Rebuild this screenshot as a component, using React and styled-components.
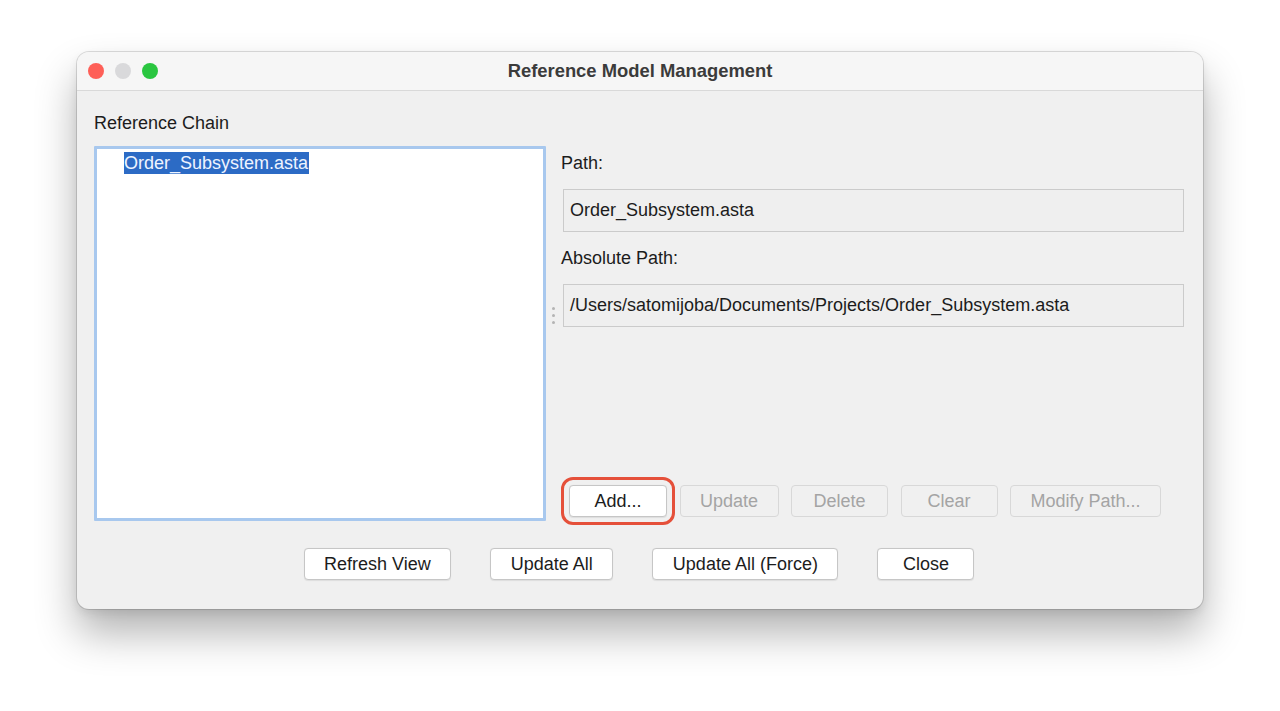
import React from "react";
import styled, { createGlobalStyle } from "styled-components";

const Global = createGlobalStyle`
  html, body { margin: 0; padding: 0; background: #ffffff; }
  body { font-family: "Liberation Sans", Arial, Helvetica, sans-serif; color: #1c1c1c; }
  * { box-sizing: border-box; }
`;

const Page = styled.div`
  width: 1280px;
  height: 711px;
  padding: 52px 0 0 77px;
  overflow: hidden;
`;

const Window = styled.div`
  width: 1126px;
  height: 557px;
  border-radius: 12px;
  background: #f0f0f0;
  box-shadow: 0 0 0 1px rgba(0, 0, 0, 0.13), 0 24px 42px rgba(0, 0, 0, 0.3), 0 4px 10px rgba(0,0,0,0.08);
  display: flex;
  flex-direction: column;
  overflow: hidden;
`;

const TitleBar = styled.div`
  height: 39px;
  flex: none;
  position: relative;
  display: flex;
  align-items: center;
  justify-content: center;
  background: #f6f6f6;
  border-bottom: 1px solid #d9d9d9;
`;

const Lights = styled.div`
  position: absolute;
  left: 11px;
  top: 11px;
  display: flex;
  gap: 11px;
`;

const Light = styled.span`
  width: 16px;
  height: 16px;
  border-radius: 50%;
  background: ${(p) => p.$color};
`;

const Title = styled.div`
  font-weight: 700;
  font-size: 18.4px;
  color: #3b3b3b;
`;

const Body = styled.div`
  flex: 1;
  padding: 22px 19px 30px 17px;
  display: flex;
  flex-direction: column;
`;

const Main = styled.div`
  display: grid;
  grid-template-columns: 452px 15px 1fr;
`;

const LeftCol = styled.div`
  display: flex;
  flex-direction: column;
`;

const Label = styled.div`
  font-size: 18px;
  line-height: 20px;
  height: 20px;
  color: #1c1c1c;
`;

const ListBox = styled.div`
  margin-top: 13px;
  height: 375px;
  background: #ffffff;
  border: 3px solid #a8c8ee;
  border-radius: 1px;
  padding: 3px 0 0 27px;
`;

const ListItem = styled.span`
  display: inline-block;
  font-size: 18px;
  line-height: 22px;
  height: 22px;
  padding-right: 1px;
  background: ${(p) => (p.$selected ? "#2c6bc5" : "transparent")};
  color: ${(p) => (p.$selected ? "#eef4ff" : "#1c1c1c")};
`;

const Splitter = styled.div`
  display: flex;
  flex-direction: column;
  align-items: center;
  gap: 4px;
  padding-top: 194px;
`;

const Dot = styled.span`
  width: 3px;
  height: 3px;
  border-radius: 50%;
  background: #b4b4b4;
`;

const RightCol = styled.div`
  margin-top: 40px;
  display: flex;
  flex-direction: column;
  padding-bottom: 4px;
`;

const Field = styled.div`
  margin: 16px 0 16px 2px;
  height: 43px;
  display: flex;
  align-items: center;
  padding-left: 6px;
  background: #efefef;
  border: 1px solid #cbcbcb;
  font-size: 18px;
  color: #1c1c1c;
  &:last-of-type { margin-bottom: 0; }
`;

const ButtonRow = styled.div`
  margin-top: auto;
  display: flex;
  gap: 12.5px;
  padding-left: 8px;
  justify-content: ${(p) => (p.$center ? "center" : "flex-start")};
  ${(p) => p.$center && "gap: 39px; margin-top: 27px; padding-left: 0;"}
`;

const Button = styled.button`
  height: 32px;
  min-width: 97px;
  padding: 0 19.5px;
  font-family: inherit;
  font-size: 18px;
  border-radius: 4px;
  border: 1px solid ${(p) => (p.disabled ? "#d8d8d8" : "#c6c6c6")};
  background: ${(p) => (p.disabled ? "#f0f0f0" : "#ffffff")};
  color: ${(p) => (p.disabled ? "#a4a4a4" : "#1c1c1c")};
  box-shadow: ${(p) => (p.disabled ? "none" : "0 0.5px 1px rgba(0,0,0,0.08)")};
  ${(p) =>
    p.$highlight &&
    `min-width: 98px; outline: 3px solid #e5503a; outline-offset: 5px;`}
`;

export default function App() {
  return (
    <Page>
      <Global />
      <Window>
        <TitleBar>
          <Lights>
            <Light $color="#fe5f57" />
            <Light $color="#d9d9db" />
            <Light $color="#2ac640" />
          </Lights>
          <Title>Reference Model Management</Title>
        </TitleBar>
        <Body>
          <Main>
            <LeftCol>
              <Label>Reference Chain</Label>
              <ListBox>
                <ListItem $selected>Order_Subsystem.asta</ListItem>
              </ListBox>
            </LeftCol>
            <Splitter>
              <Dot />
              <Dot />
              <Dot />
            </Splitter>
            <RightCol>
              <Label>Path:</Label>
              <Field>Order_Subsystem.asta</Field>
              <Label>Absolute Path:</Label>
              <Field>/Users/satomijoba/Documents/Projects/Order_Subsystem.asta</Field>
              <ButtonRow>
                <Button $highlight>Add...</Button>
                <Button disabled>Update</Button>
                <Button disabled>Delete</Button>
                <Button disabled>Clear</Button>
                <Button disabled>Modify Path...</Button>
              </ButtonRow>
            </RightCol>
          </Main>
          <ButtonRow $center>
            <Button>Refresh View</Button>
            <Button>Update All</Button>
            <Button>Update All (Force)</Button>
            <Button>Close</Button>
          </ButtonRow>
        </Body>
      </Window>
    </Page>
  );
}
